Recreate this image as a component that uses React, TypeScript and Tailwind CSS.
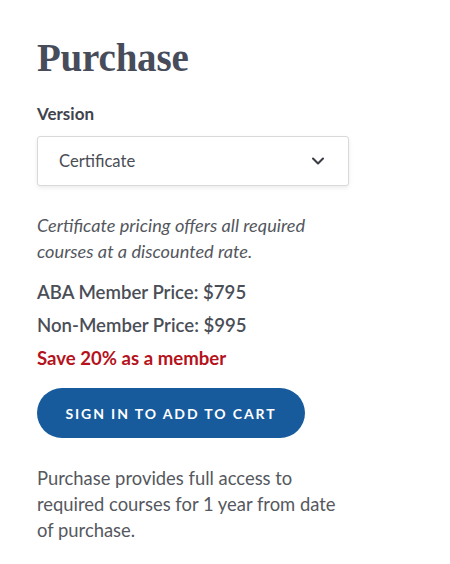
import { ChevronDown } from 'lucide-react';

export default function App() {
  return (
    <div className="min-h-[564px] w-[450px] bg-white px-[37px] pt-[34px] font-['Lato','Noto_Sans',sans-serif] text-[#4b4f58]">
      <h1 className="font-['Liberation_Serif',serif] text-[39px] font-bold leading-[48px] tracking-[-0.2px] text-[#474c5b]">
        Purchase
      </h1>

      <div className="mt-[22px] text-[17px] font-bold leading-[20px] text-[#3f434b]">Version</div>
      <div className="mt-[12px] flex h-[50px] w-[312px] items-center justify-between rounded-[3px] border border-[#d9d9d9] bg-white pl-[21px] pr-[20px] shadow-[0_2px_4px_rgba(0,0,0,0.08)]">
        <span className="text-[16.6px] text-[#4a4d55]">Certificate</span>
        <ChevronDown className="h-[20px] w-[20px] text-[#3a3d44]" strokeWidth={2.5} />
      </div>

      <p className="mt-[26px] text-[18.2px] italic leading-[26px] text-[#54575e]">
        Certificate pricing offers all required
        <br />
        courses at a discounted rate.
      </p>

      <div className="mt-[17px] flex flex-col gap-[11px] text-[18.6px] font-semibold leading-[22px] text-[#4a4e57]">
        <div>ABA Member Price: $795</div>
        <div>Non-Member Price: $995</div>
        <div className="font-bold text-[#b5121b]">Save 20% as a member</div>
      </div>

      <button
        type="button"
        className="mt-[19px] flex h-[50px] w-[268px] items-center justify-center rounded-full bg-[#175b9d] text-[14px] font-bold tracking-[1.9px] text-white"
      >
        SIGN IN TO ADD TO CART
      </button>

      <p className="mt-[27px] w-[312px] text-[18.4px] leading-[26px] text-[#55585e]">
        Purchase provides full access to required courses for 1 year from date of purchase.
      </p>
    </div>
  );
}
